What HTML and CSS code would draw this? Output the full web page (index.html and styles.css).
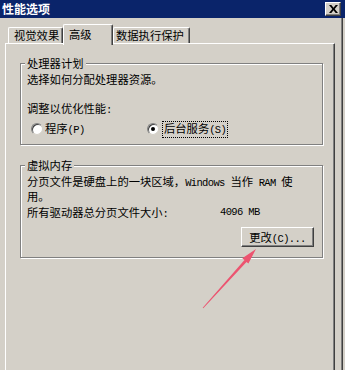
FILE: index.html
```html
<!DOCTYPE html>
<html lang="zh-CN">
<head>
<meta charset="utf-8">
<title>性能选项</title>
<link rel="stylesheet" href="styles.css">
</head>
<body>
<div class="window">
  <div class="titlebar">
    <span class="title">性能选项</span>
    <span class="close"><svg width="9" height="8" viewBox="0 0 9 8"><path d="M0 0h2.3l2.2 2.7L6.7 0H9L5.7 4 9 8H6.7L4.5 5.3 2.3 8H0l3.3-4z" fill="#000"/></svg></span>
  </div>
  <div class="client">
    <div class="tabs">
      <div class="tab t1">视觉效果</div>
      <div class="tab active">高级</div>
      <div class="tab t3">数据执行保护</div>
    </div>
    <div class="page">
      <div class="group g1">
        <div class="legend">处理器计划</div>
        <div class="line desc">选择如何分配处理器资源。</div>
        <div class="line adjust">调整以优化性能<span class="en">:</span></div>
        <div class="radios">
          <div class="radio r1"><span class="dot"></span><span class="rtext">程序<span class="en">(P)</span></span></div>
          <div class="radio r2"><span class="dot checked"></span><span class="rtext focus">后台服务<span class="en">(S)</span></span></div>
        </div>
      </div>
      <div class="group g2">
        <div class="legend">虚拟内存</div>
        <p class="para">分页文件是硬盘上的一块区域，<span class="en">Windows </span>当作<span class="en"> RAM </span>使<br>用。</p>
        <div class="size-row"><span class="size-label">所有驱动器总分页文件大小<span class="en">:</span></span><span class="size-value en">4096 MB</span></div>
        <div class="btn-row"><span class="button">更改<span class="en">(C)...</span></span></div>
      </div>
    </div>
  </div>
  <svg class="arrow" width="345" height="370" viewBox="0 0 345 370">
    <polygon points="256,249 248.4,263.6 246.5,262 203.3,308.3 202.7,307.8 244.5,260.1 242.3,258.2" fill="#ec5470"/>
  </svg>
</div>
</body>
</html>
```
FILE: styles.css
```css
* { box-sizing: border-box; }
html, body { margin: 0; padding: 0; }
body {
  width: 345px;
  height: 370px;
  overflow: hidden;
  background: #d4d0c8;
  font-family: "Noto Sans CJK SC", "Noto Sans", sans-serif;
  font-size: 11.3px;
  color: #000;
}
.en {
  font-family: "Liberation Mono", "DejaVu Sans Mono", monospace;
  font-size: 10.5px;
  letter-spacing: -0.65px;
}
.window {
  position: relative;
  width: 345px;
  height: 370px;
  background: #d4d0c8;
  box-shadow: inset -2px 0 0 #d4d0c8, inset -3px 0 0 #404040, inset -4px 0 0 #808080;
}
.titlebar {
  height: 18px;
  background: #0a246a;
  display: flex;
  align-items: center;
  justify-content: space-between;
  padding: 0 4px 0 2px;
}
.title {
  color: #fff;
  font-weight: bold;
  font-size: 12px;
  line-height: 18px;
}
.close {
  width: 16px;
  height: 14px;
  display: flex;
  align-items: center;
  justify-content: center;
  background: #d4d0c8;
  border: 1px solid;
  border-color: #fff #404040 #404040 #fff;
  box-shadow: inset -1px -1px 0 #808080;
}
.client {
  padding: 6px 10px 0 5px;
}
.tabs {
  display: flex;
  align-items: flex-end;
  height: 19px;
  padding-left: 3px;
}
.tab {
  height: 16px;
  line-height: 15px;
  padding-left: 5px;
  background: #d4d0c8;
  border-top: 1px solid #fff;
  border-left: 1px solid #fff;
  border-right: 1px solid #404040;
  border-radius: 2px 2px 0 0;
  box-shadow: inset -1px 0 0 #808080;
  white-space: nowrap;
}
.t1 { width: 55px; }
.active {
  width: 50px;
  height: 21px;
  margin-bottom: -2px;
  line-height: 18px;
  position: relative;
  z-index: 1;
}
.t3 { width: 77px; padding-left: 2px; }
.page {
  height: 327px;
  border-top: 1px solid #fff;
  border-left: 1px solid #fff;
  border-right: 1px solid #404040;
  box-shadow: inset -1px 0 0 #808080;
  padding-top: 0.02px;
}
.group {
  border: 1px solid #808080;
  box-shadow: inset 1px 1px 0 #fff, 1px 1px 0 #fff;
  padding: 0 6px 8px 6px;
  margin: 0 11px 0 14px;
}
.g1 { margin-top: 19px; }
.g2 { margin-top: 20px; padding-bottom: 10px; }
.legend {
  width: fit-content;
  margin: -7px 0 0 -2px;
  padding: 0 2px;
  background: #d4d0c8;
  line-height: 13px;
}
.line { line-height: 13px; }
.desc { margin-top: 3px; }
.adjust { margin-top: 16px; }
.radios {
  display: flex;
  align-items: center;
  height: 14px;
  margin-top: 5px;
}
.radio {
  display: flex;
  align-items: center;
}
.r1 { width: 120px; padding-left: 4px; }
.dot {
  width: 12px;
  height: 12px;
  border-radius: 50%;
  background: #fff;
  border: 1px solid;
  border-color: #808080 #d4d0c8 #d4d0c8 #808080;
  box-shadow: inset 1px 1px 0 #404040;
  display: flex;
  align-items: center;
  justify-content: center;
}
.checked::after {
  content: "";
  width: 4px;
  height: 4px;
  border-radius: 50%;
  background: #000;
}
.rtext { line-height: 13px; margin-left: 2px; }
.focus {
  margin-left: 3px;
  border: 1px dotted #000;
  padding: 0 1px;
  line-height: 13px;
}
.para {
  margin: 3px 0 0 0;
  line-height: 13px;
}
.size-row {
  display: flex;
  margin-top: 3px;
  line-height: 13px;
}
.size-label { width: 193px; }
.btn-row {
  display: flex;
  justify-content: flex-end;
  margin-top: 6px;
  padding-right: 2px;
}
.button {
  width: 73px;
  height: 20px;
  line-height: 18px;
  text-align: center;
  background: #d4d0c8;
  border: 1px solid;
  border-color: #fff #404040 #404040 #fff;
  box-shadow: inset -1px -1px 0 #808080;
}
.arrow {
  position: absolute;
  left: 0;
  top: 0;
  pointer-events: none;
}
```
